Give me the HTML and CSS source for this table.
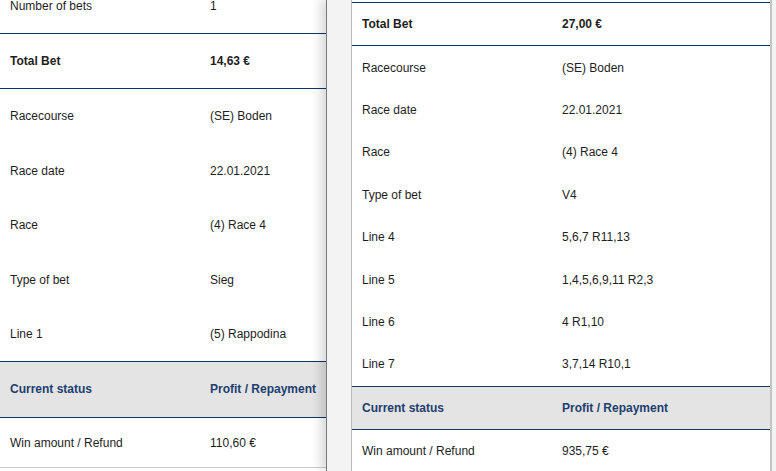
FILE: index.html
```html
<!DOCTYPE html>
<html lang="en">
<head>
<meta charset="utf-8">
<title>Bet slips</title>
<link rel="stylesheet" href="styles.css">
</head>
<body>
<div class="layout">
  <section class="panel-left">
    <div class="sheet sheet--left">
      <div class="row"><span class="label">Number of bets</span><span class="value">1</span></div>
      <div class="row row--total"><span class="label">Total Bet</span><span class="value">14,63 €</span></div>
      <div class="row"><span class="label">Racecourse</span><span class="value">(SE) Boden</span></div>
      <div class="row"><span class="label">Race date</span><span class="value">22.01.2021</span></div>
      <div class="row"><span class="label">Race</span><span class="value">(4) Race 4</span></div>
      <div class="row"><span class="label">Type of bet</span><span class="value">Sieg</span></div>
      <div class="row"><span class="label">Line 1</span><span class="value">(5) Rappodina</span></div>
      <div class="row row--status"><span class="label">Current status</span><span class="value">Profit / Repayment</span></div>
      <div class="row row--last"><span class="label">Win amount / Refund</span><span class="value">110,60 €</span></div>
    </div>
  </section>
  <section class="panel-right-wrap">
    <div class="panel-right">
      <div class="sheet sheet--right">
        <div class="row row--total"><span class="label">Total Bet</span><span class="value">27,00 €</span></div>
        <div class="row"><span class="label">Racecourse</span><span class="value">(SE) Boden</span></div>
        <div class="row"><span class="label">Race date</span><span class="value">22.01.2021</span></div>
        <div class="row"><span class="label">Race</span><span class="value">(4) Race 4</span></div>
        <div class="row"><span class="label">Type of bet</span><span class="value">V4</span></div>
        <div class="row"><span class="label">Line 4</span><span class="value">5,6,7 R11,13</span></div>
        <div class="row"><span class="label">Line 5</span><span class="value">1,4,5,6,9,11 R2,3</span></div>
        <div class="row"><span class="label">Line 6</span><span class="value">4 R1,10</span></div>
        <div class="row"><span class="label">Line 7</span><span class="value">3,7,14 R10,1</span></div>
        <div class="row row--status"><span class="label">Current status</span><span class="value">Profit / Repayment</span></div>
        <div class="row"><span class="label">Win amount / Refund</span><span class="value">935,75 €</span></div>
      </div>
    </div>
  </section>
</div>
</body>
</html>
```

FILE: styles.css
```css
html, body {
  margin: 0;
  padding: 0;
}
body {
  width: 776px;
  height: 471px;
  overflow: hidden;
  background: #f3f3f3;
  font-family: "Liberation Sans", Arial, sans-serif;
  font-size: 12px;
  color: #1e1e1e;
}
.layout {
  display: flex;
  height: 471px;
}
.panel-left {
  flex: none;
  width: 326px;
  height: 471px;
  background: #fff;
  overflow: hidden;
}
.panel-right-wrap {
  flex: 1;
  position: relative;
  z-index: 1;
  background: #f3f3f3;
  border-left: 1px solid #7a7a7a;
  box-shadow: -5px 0 10px rgba(0, 0, 0, 0.16);
  padding: 0 4px 0 24px;
}
.panel-right {
  height: 471px;
  background: #fff;
  border-left: 1px solid #bdbdbd;
  border-right: 2px solid #c4c4c4;
  overflow: hidden;
}
.sheet {
  display: flex;
  flex-direction: column;
}
.sheet--left {
  margin-top: -21.4px;
}
.sheet--right {
  padding-top: 2px;
}
.row {
  display: flex;
  line-height: 14.4px;
  white-space: nowrap;
}
.sheet--left .row {
  padding: 20px 0;
}
.sheet--right .row {
  padding: 14.2px 0 13.8px;
}
.label {
  flex: none;
  width: 210px;
  padding-left: 10px;
  box-sizing: border-box;
}
.value {
  flex: 1;
}
.row--total {
  border-top: 1px solid #0c3466;
  border-bottom: 1px solid #0c3466;
  font-weight: bold;
}
.row--status {
  background: #e4e4e4;
  border-top: 1px solid #0c3466;
  border-bottom: 1px solid #0c3466;
  font-weight: bold;
  color: #1d3f70;
}
.sheet--left .row--last {
  padding: 18px 0 17px;
  border-bottom: 1px solid #cacaca;
}
```
